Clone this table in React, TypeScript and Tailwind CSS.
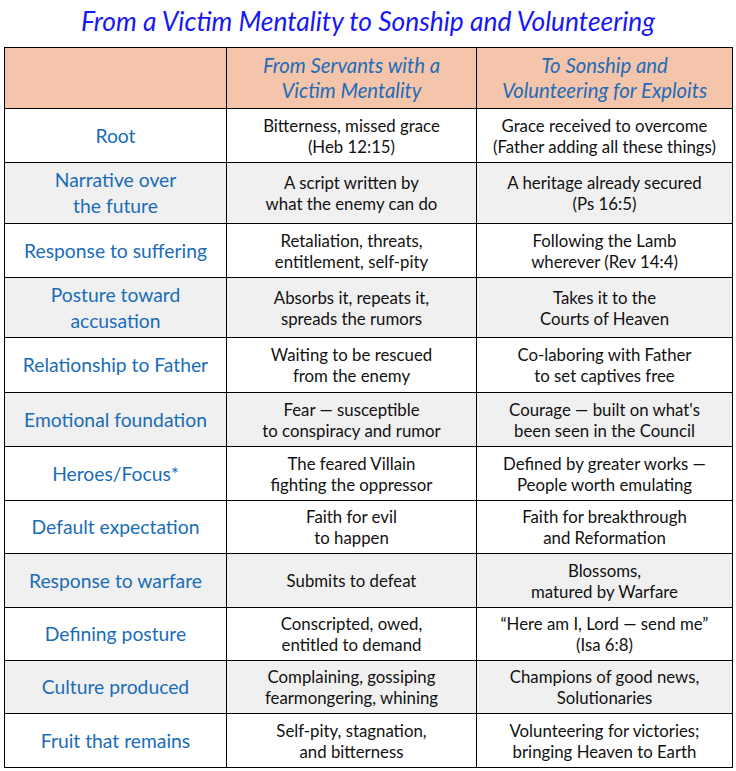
const rows: { label: string[]; from: string[]; to: string[]; gray: boolean; h: string }[] = [
  { label: ["Root"], from: ["Bitterness, missed grace", "(Heb 12:15)"], to: ["Grace received to overcome", "(Father adding all these things)"], gray: false, h: "h-[54px]" },
  { label: ["Narrative over", "the future"], from: ["A script written by", "what the enemy can do"], to: ["A heritage already secured", "(Ps 16:5)"], gray: true, h: "h-[61px]" },
  { label: ["Response to suffering"], from: ["Retaliation, threats,", "entitlement, self-pity"], to: ["Following the Lamb", "wherever (Rev 14:4)"], gray: false, h: "h-[54px]" },
  { label: ["Posture toward", "accusation"], from: ["Absorbs it, repeats it,", "spreads the rumors"], to: ["Takes it to the", "Courts of Heaven"], gray: true, h: "h-[60px]" },
  { label: ["Relationship to Father"], from: ["Waiting to be rescued", "from the enemy"], to: ["Co-laboring with Father", "to set captives free"], gray: false, h: "h-[55px]" },
  { label: ["Emotional foundation"], from: ["Fear \u2014 susceptible", "to conspiracy and rumor"], to: ["Courage \u2014 built on what's", "been seen in the Council"], gray: true, h: "h-[54px]" },
  { label: ["Heroes/Focus*"], from: ["The feared Villain", "fighting the oppressor"], to: ["Defined by greater works \u2014", "People worth emulating"], gray: false, h: "h-[54px]" },
  { label: ["Default expectation"], from: ["Faith for evil", "to happen"], to: ["Faith for breakthrough", "and Reformation"], gray: false, h: "h-[53px]" },
  { label: ["Response to warfare"], from: ["Submits to defeat"], to: ["Blossoms,", "matured by Warfare"], gray: true, h: "h-[54px]" },
  { label: ["Defining posture"], from: ["Conscripted, owed,", "entitled to demand"], to: ["\u201cHere am I, Lord \u2014 send me\u201d", "(Isa 6:8)"], gray: false, h: "h-[53px]" },
  { label: ["Culture produced"], from: ["Complaining, gossiping", "fearmongering, whining"], to: ["Champions of good news,", "Solutionaries"], gray: true, h: "h-[53px]" },
  { label: ["Fruit that remains"], from: ["Self-pity, stagnation,", "and bitterness"], to: ["Volunteering for victories;", "bringing Heaven to Earth"], gray: false, h: "h-[54px]" },
];

function Lines({ lines }: { lines: string[] }) {
  return (
    <>
      {lines.map((l, i) => (
        <div key={i} className="whitespace-nowrap">{l}</div>
      ))}
    </>
  );
}

export default function App() {
  return (
    <div className="w-[736px] h-[771px] bg-white font-['Lato','Liberation_Sans',sans-serif] overflow-hidden">
      <h1 className="h-[47px] flex items-center justify-center text-[26.4px] italic text-[#1818f2] pb-[3px]">
        From a Victim Mentality to Sonship and Volunteering
      </h1>
      <table className="ml-[4px] w-[728px] table-fixed border-collapse border-[1.5px] border-black">
        <colgroup>
          <col className="w-[222px]" />
          <col className="w-[250px]" />
          <col className="w-[256px]" />
        </colgroup>
        <thead>
          <tr className="h-[61px] bg-[#f4c4ab]">
            <th className="border-[1.5px] border-black" />
            <th className="border-[1.5px] border-black text-[20.3px] leading-[25px] font-normal italic text-[#1f6db8]">
              <div>From Servants with a</div>
              <div>Victim Mentality</div>
            </th>
            <th className="border-[1.5px] border-black text-[20.3px] leading-[25px] font-normal italic text-[#1f6db8]">
              <div>To Sonship and</div>
              <div>Volunteering for Exploits</div>
            </th>
          </tr>
        </thead>
        <tbody>
          {rows.map((r, i) => (
            <tr key={i} className={`${r.h} ${r.gray ? "bg-[#f0f0f0]" : "bg-white"}`}>
              <td className="border-[1.5px] border-black text-center text-[19.3px] leading-[26px] text-[#1a6cb8]">
                <Lines lines={r.label} />
              </td>
              <td className="border-[1.5px] border-black text-center text-[16.8px] leading-[21px] text-[#111]">
                <Lines lines={r.from} />
              </td>
              <td className="border-[1.5px] border-black text-center text-[16.8px] leading-[21px] text-[#111]">
                <Lines lines={r.to} />
              </td>
            </tr>
          ))}
        </tbody>
      </table>
    </div>
  );
}
